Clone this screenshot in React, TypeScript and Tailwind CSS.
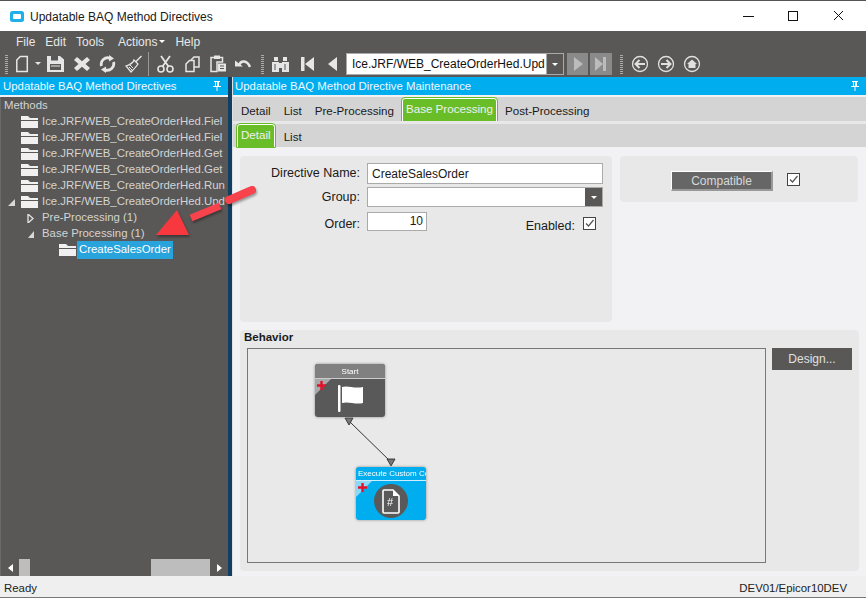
import React from "react";

const F = "font-['Liberation_Sans',Arial,sans-serif]";
const C = "#e6e6e6";

const Folder = () => (
  <svg width="17" height="12" viewBox="0 0 17 12" className="shrink-0">
    <path d="M0 0h7l2 2h8v2H0z" fill="#f0f0f0" />
    <rect x="0" y="5" width="17" height="7" fill="#f0f0f0" />
  </svg>
);

const Pin = () => (
  <svg width="10" height="12" viewBox="0 0 10 12" fill="#fff">
    <path d="M2 1h6v1H7v4h2v1H5.500v4h-1V7H1V6h2V2H2zM4 2v4h1V2z" />
  </svg>
);

const TreeFolder = ({ label, expanded }: { label: string; expanded?: boolean }) => (
  <div className="flex h-4 items-center">
    <span className="flex w-[18px] shrink-0 justify-end pr-[6px]">
      {expanded && (
        <svg width="7" height="7" viewBox="0 0 7 7"><path d="M7 0v7H0z" fill="#d8d8d8" /></svg>
      )}
    </span>
    <Folder />
    <span className="ml-[4px] whitespace-nowrap text-[#d4d4d4]">{label}</span>
  </div>
);

const Tab = ({ label, active, className = "" }: { label: string; active?: boolean; className?: string }) =>
  active ? (
    <div className={`flex h-full items-center rounded-t-[3px] border border-b-0 border-white bg-[#69be28] pb-[3px] text-[#f0f0f0] outline outline-1 outline-[#69be28] ${className}`}>
      {label}
    </div>
  ) : (
    <div className={`flex h-full items-center pt-[3px] text-[#1a1a1a] ${className}`}>{label}</div>
  );

const I = ({ children, w, className = "" }: { children: React.ReactNode; w: number; className?: string }) => (
  <svg width={w} height="20" viewBox={`0 0 ${w} 20`} className={`shrink-0 ${className}`}>{children}</svg>
);

const Grip = ({ className = "" }: { className?: string }) => (
  <div className={`h-[19px] w-[3px] shrink-0 bg-[repeating-linear-gradient(to_bottom,#aaa_0,#aaa_1px,transparent_1px,transparent_2px)] ${className}`} />
);

const Check = ({ className = "" }: { className?: string }) => (
  <span className={`flex h-[13px] w-[13px] shrink-0 items-center justify-center border border-[#444] bg-white ${className}`}>
    <svg width="11" height="11" viewBox="0 0 11 11"><path d="M2 5.500l2.500 2.500L9.500 2" fill="none" stroke="#555" strokeWidth="1.200" /></svg>
  </span>
);

const Plus = () => (
  <svg width="9" height="9" viewBox="0 0 9 9" className="absolute left-[2px] top-[2px]"><path d="M3.300 0h2.400v3.300H9v2.400H5.700V9H3.300V5.700H0V3.300h3.300z" fill="#e3102a" /></svg>
);

export default function App() {
  return (
    <div className={`${F} relative flex h-[598px] w-[866px] flex-col overflow-hidden border-t border-[#555] bg-[#595856] text-[12px]`}>
      {/* title bar */}
      <div className="flex h-[30px] shrink-0 items-center bg-white pl-[10px] pt-[1px] text-[#1a1a1a]">
        <svg width="14" height="11" viewBox="0 0 14 11"><rect width="14" height="11" rx="2.500" fill="#1fb0ea" /><rect x="3" y="3" width="8" height="5" rx="1" fill="#fff" /></svg>
        <span className="ml-[6px] text-[12px]">Updatable BAQ Method Directives</span>
        <div className="ml-auto flex items-center pr-[23px]">
          <svg width="100" height="28" viewBox="0 0 100 28" fill="none" stroke="#111" strokeWidth="1">
            <path d="M0 13.500h11" />
            <rect x="45.500" y="8.500" width="9" height="9" />
            <path d="M91 8l9 9M100 8l-9 9" />
          </svg>
        </div>
      </div>

      {/* menu */}
      <div className="flex h-[20px] shrink-0 items-center pl-[16px] pt-[2px] text-[#e8e8e8]">
        <span>File</span>
        <span className="ml-[10px]">Edit</span>
        <span className="ml-[10px]">Tools</span>
        <span className="ml-[14px] flex items-center gap-[2px]">Actions<span className="mb-[2px] h-0 w-0 border-x-[3px] border-t-[3px] border-x-transparent border-t-white" /></span>
        <span className="ml-[10px]">Help</span>
      </div>

      {/* toolbar */}
      <div className="flex h-[26px] shrink-0 items-center pl-[5px]">
        <Grip />
        <I w={26} className="ml-[7px]"><path d="M1.800 6l3.500-3.500h7V17.500H1.800z" fill="none" stroke={C} strokeWidth="1.500" /><path d="M20 8h6l-3 3z" fill={C} /></I>
        <I w={17} className="ml-[6px]"><path d="M0 2h13l4 3.500V18H0z" fill={C} /><rect x="4" y="2" width="7" height="4.500" fill="#595856" /><rect x="3" y="10" width="11" height="6" fill="#595856" /><rect x="4" y="11.500" width="9" height="1" fill={C} /></I>
        <I w={16} className="ml-[10px]"><path d="M3 3l5 4.200L13 3l3 3-4.500 4 4.500 4-3 3-5-4.200L3 17l-3-3 4.500-4L0 6z" fill={C} /></I>
        <I w={17} className="ml-[9px]"><path d="M2.500 12C1 7 6 2.500 11 4.200M14.500 8c1.500 5-3.500 9.500-8.500 7.800" fill="none" stroke={C} strokeWidth="2.800" /><path d="M10 1l5 3.500-5 3zM7 19l-5-3.500 5-3z" fill={C} /></I>
        <I w={17} className="ml-[9px]"><path d="M16.500 2l-6 6" stroke={C} strokeWidth="1.500" /><path d="M9 6c-1 3-5 5-8 6l5 6c2-2 5-5 7-8z" fill="none" stroke={C} strokeWidth="1.300" /><path d="M5 11l3 3M4 13l3 3" stroke={C} /></I>
        <div className="ml-[6px] h-[24px] w-px shrink-0 bg-[#999]" />
        <I w={17} className="ml-[8px]"><circle cx="4" cy="15" r="3" fill="none" stroke={C} strokeWidth="1.600" /><circle cx="13" cy="15" r="3" fill="none" stroke={C} strokeWidth="1.600" /><path d="M5.500 12.500L13 2M11.500 12.500L4 2" stroke={C} strokeWidth="1.800" /></I>
        <I w={15} className="ml-[11px]"><path d="M6 6l3-3h5v10H9" fill="none" stroke={C} strokeWidth="1.500" /><path d="M1 10l3.500-3.500H9V17.500H1z" fill="none" stroke={C} strokeWidth="1.500" /></I>
        <I w={16} className="ml-[10px]"><path d="M1 3.500h11.500V8H7v9.500H1z" fill="none" stroke={C} strokeWidth="1.500" /><rect x="4" y="1.500" width="6" height="3.500" fill={C} /><rect x="8" y="9.500" width="8" height="8" fill={C} /><path d="M10 12h4M10 14.500h4" stroke="#595856" /></I>
        <I w={16} className="ml-[9px]"><path d="M4 11C6 6 12 6 15 13" fill="none" stroke={C} strokeWidth="2.600" /><path d="M0 6.500l8 6H0z" fill={C} /></I>
        <Grip className="ml-[10px]" />
        <I w={17} className="ml-[8px]"><path d="M0 8h7v10H0zM10 8h7v10h-7zM7 9h3v5H7zM2 3h4v4H2zM11 3h4v4h-4z" fill={C} /><path d="M3 10v6M13 10v6" stroke="#595856" /></I>
        <I w={13} className="ml-[12px]"><path d="M0 3h3.500v14H0zM13 3v14L4 10z" fill={C} /></I>
        <I w={9} className="ml-[14px]"><path d="M9 3v14L0 10z" fill={C} /></I>
        {/* combo */}
        <div className="ml-[9px] flex h-[22px] w-[218px] shrink-0 items-center border border-[#aaa] bg-white">
          <span className="flex-1 overflow-hidden whitespace-nowrap pl-[5px] text-[#111]">Ice.JRF/WEB_CreateOrderHed.Upd</span>
          <span className="flex h-full w-[17px] shrink-0 items-center justify-center border-l border-[#aaa] bg-[#595856]"><span className="h-0 w-0 border-x-[3px] border-t-[3px] border-x-transparent border-t-white" /></span>
        </div>
        <div className="ml-[3px] flex h-[22px] w-[21px] shrink-0 items-center justify-center bg-[#8a8a8a]"><I w={14}><path d="M3 3v14l9-7z" fill="#bcbcbc" /></I></div>
        <div className="ml-[2px] flex h-[22px] w-[22px] shrink-0 items-center justify-center bg-[#8a8a8a]"><I w={14}><path d="M1 3v14l8-7zM9 3h3v14H9z" fill="#bcbcbc" /></I></div>
        <Grip className="ml-[8px]" />
        <svg width="18" height="18" viewBox="0 0 18 18" className="ml-[8px] shrink-0"><circle cx="9" cy="9" r="7.500" fill="none" stroke="#e0e0e0" strokeWidth="1.300" /><path d="M14 9H5M8.500 5L4.500 9l4 4" fill="none" stroke="#e0e0e0" strokeWidth="2" /></svg>
        <svg width="18" height="18" viewBox="0 0 18 18" className="ml-[8px] shrink-0"><circle cx="9" cy="9" r="7.500" fill="none" stroke="#e0e0e0" strokeWidth="1.300" /><path d="M4 9h9M9.500 5l4 4-4 4" fill="none" stroke="#e0e0e0" strokeWidth="2" /></svg>
        <svg width="18" height="18" viewBox="0 0 18 18" className="ml-[8px] shrink-0"><circle cx="9" cy="9" r="7.500" fill="none" stroke="#e0e0e0" strokeWidth="1.300" /><path d="M4 9l5-4.500L14 9h-1.500v4h-7V9z" fill="#e0e0e0" /></svg>
      </div>

      {/* main */}
      <div className="flex min-h-0 flex-1">
        {/* left pane */}
        <div className="flex w-[228px] shrink-0 flex-col text-[11.400px]">
          <div className="flex h-[18px] shrink-0 items-center justify-between bg-[#00aeef] pl-[3px] pr-[6px] text-[#f0f8ff]">
            <span className="pt-[2px]">Updatable BAQ Method Directives</span>
            <Pin />
          </div>
          <div className="h-[2px] shrink-0 bg-[#f2f2f5]" />
          <div className="flex min-h-0 flex-1 flex-col border-l border-[#6a6a6a] pl-[3px]">
            <div className="flex h-[17px] items-center pt-[1px] text-[#d4d4d4]">Methods</div>
            <div className="-ml-[1px]">
              <TreeFolder label="Ice.JRF/WEB_CreateOrderHed.Fiel" />
              <TreeFolder label="Ice.JRF/WEB_CreateOrderHed.Fiel" />
              <TreeFolder label="Ice.JRF/WEB_CreateOrderHed.Get" />
              <TreeFolder label="Ice.JRF/WEB_CreateOrderHed.Get" />
              <TreeFolder label="Ice.JRF/WEB_CreateOrderHed.Run" />
              <TreeFolder label="Ice.JRF/WEB_CreateOrderHed.Upd" expanded />
            </div>
            <div className="flex h-4 items-center pl-[23px] text-[#d4d4d4]">
              <svg width="15" height="9" viewBox="0 0 15 9" className="shrink-0"><path d="M1 0l5 4.500L1 9z" fill="none" stroke="#ddd" strokeWidth="1.400" /></svg>
              Pre-Processing (1)
            </div>
            <div className="flex h-4 items-center pl-[24px] text-[#d4d4d4]">
              <svg width="14" height="7" viewBox="0 0 14 7" className="shrink-0"><path d="M6 0v7H0z" fill="#d8d8d8" /></svg>
              Base Processing (1)
            </div>
            <div className="flex h-4 items-center pl-[55px]">
              <Folder />
              <span className="ml-[1px] bg-[#29a3dc] px-[2px] text-white">CreateSalesOrder</span>
            </div>
            {/* scrollbar */}
            <div className="mt-auto flex h-[17px] shrink-0 items-stretch">
              <span className="ml-[4px] flex w-[11px] items-center"><span className="h-0 w-0 border-y-[4px] border-r-[5px] border-y-transparent border-r-white" /></span>
              <span className="w-[11px] bg-[#bdbdbd]" />
              <span className="ml-[121px] w-[59px] bg-[#bdbdbd]" />
              <span className="ml-[7px] flex items-center"><span className="h-0 w-0 border-y-[4px] border-l-[5px] border-y-transparent border-l-white" /></span>
            </div>
          </div>
        </div>

        {/* splitter */}
        <div className="w-[5px] shrink-0 border-r border-[#e0e0e0] bg-[#0f3f63]" />

        {/* right pane */}
        <div className="flex min-w-0 flex-1 flex-col bg-[#f2f2f5] text-[#1a1a1a]">
          <div className="flex h-[18px] shrink-0 items-center justify-between bg-[#00aeef] pl-[2px] pr-[6px] text-[11.400px] text-[#f0f8ff]">
            <span className="pt-[2px]">Updatable BAQ Method Directive Maintenance</span>
            <Pin />
          </div>
          <div className="h-[2px] shrink-0 bg-[#f2f2f5]" />
          <div className="flex h-[24px] shrink-0 items-stretch bg-[#d4d4d4] pl-[8px] pt-[1px] text-[11.600px]">
            <Tab label="Detail" />
            <Tab label="List" className="ml-[13px]" />
            <Tab label="Pre-Processing" className="ml-[13px]" />
            <Tab label="Base Processing" active className="ml-[8px] px-[3px]" />
            <Tab label="Post-Processing" className="ml-[8px]" />
          </div>
          <div className="h-[3px] shrink-0 bg-[#e8e8e8]" />
          <div className="flex h-[23px] shrink-0 items-stretch bg-[#d4d4d4] pl-[4px] text-[11.600px]">
            <Tab label="Detail" active className="px-[3px]" />
            <Tab label="List" className="ml-[9px]" />
          </div>

          <div className="flex min-h-0 flex-1 flex-col px-[7px] pb-[5px] pt-[9px]">
            <div className="flex h-[166px] shrink-0 gap-[8px]">
              {/* detail group */}
              <div className="w-[372px] rounded-[4px] bg-[#e8e8e8] pl-[5px] pt-[7px]">
                <div className="grid grid-cols-[115px_236px] items-center gap-x-[7px] gap-y-[3px]">
                  <span className="text-right text-[12.500px]">Directive Name:</span>
                  <div className="flex h-[21px] items-center border border-[#aaa] bg-white pl-[4px]">CreateSalesOrder</div>
                  <span className="pt-[1px] text-right text-[12.500px]">Group:</span>
                  <div className="flex h-[20px] items-center justify-end border border-[#aaa] bg-white">
                    <span className="flex h-full w-[17px] items-center justify-center bg-[#595856]"><span className="h-0 w-0 border-x-[3px] border-t-[3px] border-x-transparent border-t-white" /></span>
                  </div>
                  <span className="self-start pt-[5px] text-right text-[12.500px]">Order:</span>
                  <div className="mt-[2px] flex h-[19px] items-start justify-between self-start">
                    <div className="flex h-[19px] w-[60px] items-center justify-end border border-[#aaa] bg-white pb-[2px] pr-[3px]">10</div>
                    <div className="mt-[5px] flex items-start gap-[8px] pr-[7px]">
                      <span className="text-[12.500px]">Enabled:</span>
                      <Check />
                    </div>
                  </div>
                </div>
              </div>
              {/* compatible */}
              <div className="flex h-[46px] w-[238px] items-start rounded-[4px] bg-[#e8e8e8] pl-[51px] pt-[15px]">
                <div className="flex h-[20px] w-[102px] items-center justify-center border-b-2 border-l border-r-2 border-t border-b-[#999] border-l-white border-r-[#999] border-t-white bg-[#666] text-[#d8d8d8]">Compatible</div>
                <Check className="ml-[14px] mt-[2px]" />
              </div>
            </div>

            {/* behavior */}
            <div className="mt-[8px] flex min-h-0 flex-1 flex-col rounded-[4px] bg-[#e8e8e8] px-[7px] pb-[8px]">
              <div className="-ml-[3px] -mt-[1px] h-[19px] shrink-0 text-[11.500px] font-bold">Behavior</div>
              <div className="flex min-h-0 flex-1 gap-[6px]">
                <div className="relative w-[519px] shrink-0 border border-[#777] bg-[#e9e9e9]">
                  <svg width="70" height="60" viewBox="0 0 70 60" className="absolute left-[90px] top-[66px] blur-[0.3px]">
                    <path d="M11 6L53 47" stroke="#333" strokeWidth="1" />
                    <path d="M7 3h8l-4 7z" fill="#777" stroke="#222" strokeWidth="0.800" />
                    <path d="M49 44h8l-4 7z" fill="#777" stroke="#222" strokeWidth="0.800" />
                  </svg>
                  {/* Start node */}
                  <div className="absolute left-[67px] top-[15px] flex h-[53px] w-[70px] flex-col overflow-hidden rounded-[3px] bg-[#595959] shadow-[0_0_3px_#888] blur-[0.3px]">
                    <div className="flex h-[15px] shrink-0 items-center justify-center border-b border-[#ccc] bg-[#808080] pt-[2px] text-[8px] text-white">Start</div>
                    <div className="relative flex flex-1 items-center justify-center">
                      <svg width="16" height="16" viewBox="0 0 16 16" className="absolute left-0 top-0"><path d="M0 0h16L0 16z" fill="#a8a8a8" /></svg>
                      <Plus />
                      <svg width="27" height="29" viewBox="0 0 27 29"><rect x="1" y="1" width="2.500" height="27" rx="1" fill="#fff" /><path d="M5 3c6-2 12 2 21 0v16c-8 2-14-2-21 0z" fill="#fff" /></svg>
                    </div>
                  </div>
                  {/* Execute node */}
                  <div className="absolute left-[108px] top-[118px] flex h-[53px] w-[70px] flex-col overflow-hidden rounded-[3px] bg-[#00aeef] shadow-[0_0_3px_#888] blur-[0.3px]">
                    <div className="flex h-[14px] shrink-0 items-center justify-start overflow-hidden whitespace-nowrap border-b border-[#cdeefc] pl-[2px] text-[8px] text-white">Execute Custom Cc</div>
                    <div className="relative flex flex-1 items-center justify-center pt-[1px]">
                      <svg width="16" height="16" viewBox="0 0 16 16" className="absolute left-0 top-0"><path d="M0 0h16L0 16z" fill="#8fd8f5" /></svg>
                      <Plus />
                      <svg width="34" height="34" viewBox="0 0 34 34"><circle cx="17" cy="17" r="17" fill="#595959" /><path d="M9 7a1 1 0 0 1 1-1h9l6 6v16a1 1 0 0 1-1 1H10a1 1 0 0 1-1-1z" fill="none" stroke="#fff" strokeWidth="1.600" /><path d="M19 6l6 6h-6z" fill="#fff" /></svg>
                      <span className="absolute left-[31px] top-[15px] text-[11px] leading-[12px] text-white">#</span>
                    </div>
                  </div>
                </div>
                <div className="flex h-[22px] w-[80px] shrink-0 items-center justify-center bg-[#595856] text-[#e0e0e0]">Design...</div>
              </div>
            </div>
          </div>
        </div>
      </div>

      {/* status */}
      <div className="flex h-[22px] shrink-0 items-center justify-between border-b border-[#777] bg-[#efefef] pl-[4px] pr-[19px] pt-[4px] text-[11.400px] text-[#222]">
        <span>Ready</span>
        <span>DEV01/Epicor10DEV</span>
      </div>

      {/* callout arrow */}
      <svg width="110" height="60" viewBox="0 0 110 60" className="absolute left-[150px] top-[181px] drop-shadow-[1px_2px_1px_rgba(0,0,0,0.35)]">
        <path d="M6 53L27 28L39 53Z" fill="#f8383f" />
        <path d="M41 36L70 24" stroke="#f8434d" strokeWidth="7" />
        <path d="M79 18L102 8" stroke="#f8434d" strokeWidth="8" strokeLinecap="round" />
      </svg>
    </div>
  );
}
